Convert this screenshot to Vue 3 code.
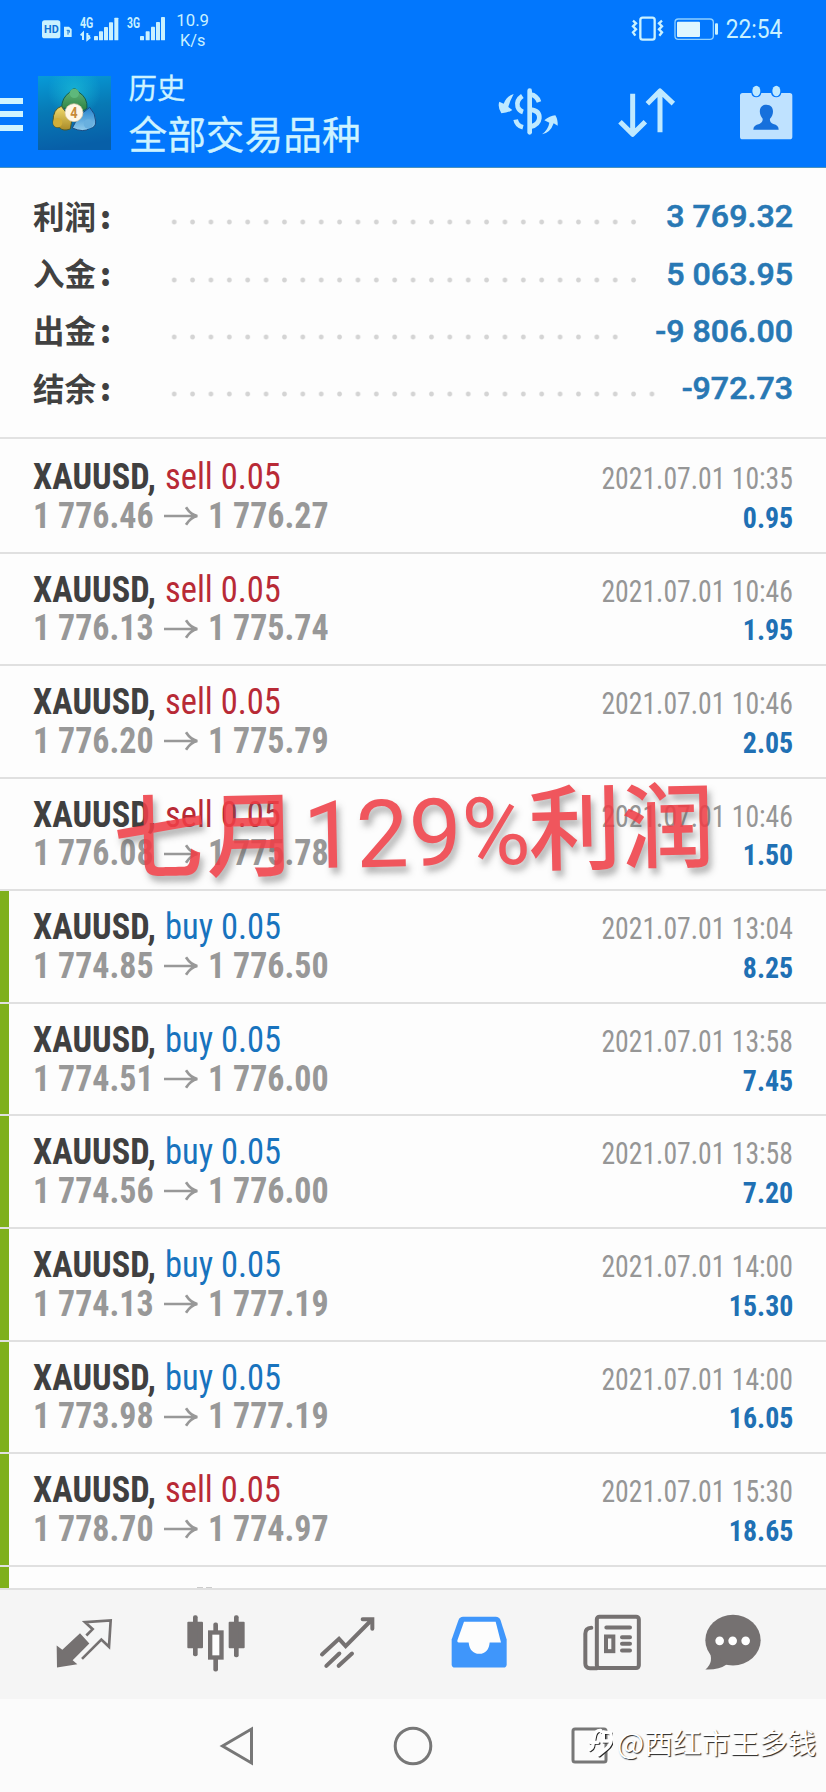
<script setup>
const summary = [
  { label: '利润', value: '3 769.32', dots: 26 },
  { label: '入金', value: '5 063.95', dots: 26 },
  { label: '出金', value: '-9 806.00', dots: 25 },
  { label: '结余', value: '-972.73', dots: 27 },
]
const deal = (side, open, close, time, profit, marked = true) => ({ side, open, close, time, profit, marked })
const deals = [
  deal('sell', '1 776.46', '1 776.27', '10:35', '0.95', false),
  deal('sell', '1 776.13', '1 775.74', '10:46', '1.95', false),
  deal('sell', '1 776.20', '1 775.79', '10:46', '2.05', false),
  deal('sell', '1 776.08', '1 775.78', '10:46', '1.50', false),
  deal('buy', '1 774.85', '1 776.50', '13:04', '8.25'),
  deal('buy', '1 774.51', '1 776.00', '13:58', '7.45'),
  deal('buy', '1 774.56', '1 776.00', '13:58', '7.20'),
  deal('buy', '1 774.13', '1 777.19', '14:00', '15.30'),
  deal('buy', '1 773.98', '1 777.19', '14:00', '16.05'),
  deal('sell', '1 778.70', '1 774.97', '15:30', '18.65'),
]
const barsA = [[282, 108], [297, 94], [312, 81], [327, 67], [343, 53]]
const barsB = [[420, 108], [437, 94], [453, 80], [468, 66], [483, 51]]
</script>

<template>
  <div class="screen">
    <header class="top">
      <div class="status">
        <svg width="215" height="56" viewBox="0 0 645 168" class="pale">
          <rect x="126" y="61" width="55" height="54" rx="8" />
          <text x="132" y="99" font-size="31" font-weight="700" textLength="44" lengthAdjust="spacingAndGlyphs" class="cut">HD</text>
          <path d="M192 80H207L215 88V111H192Z" />
          <path d="M200 91H204V104M204 91H208V98" class="cutline" />
          <text x="240" y="83" font-size="42" font-weight="700" textLength="40" lengthAdjust="spacingAndGlyphs">4G</text>
          <path d="M249 120V99L242 106M262 99V119L271 112M262 106L270 110" fill="none" stroke="#c9f1ff" stroke-width="6" />
          <rect v-for="b in barsA" :key="b[0]" :x="b[0]" :y="b[1]" width="12" :height="121 - b[1]" rx="2" />
          <text x="381" y="83" font-size="42" font-weight="700" textLength="39" lengthAdjust="spacingAndGlyphs">3G</text>
          <rect v-for="b in barsB" :key="b[0]" :x="b[0]" :y="b[1]" width="12" :height="121 - b[1]" rx="2" />
          <text x="529" y="77" font-size="52" textLength="98" lengthAdjust="spacingAndGlyphs">10.9</text>
          <text x="540" y="138" font-size="50" textLength="76" lengthAdjust="spacingAndGlyphs">K/s</text>
        </svg>
        <svg width="200" height="56" viewBox="639 0 600 168" class="pale">
          <rect x="682" y="53" width="43" height="66" rx="7" fill="none" stroke="#c9f1ff" stroke-width="7" />
          <path d="M660 62L669 70L660 79L669 88L660 97L667 107M747 62L738 70L747 79L738 88L747 97L739 107" fill="none" stroke="#c9f1ff" stroke-width="7" />
          <rect x="786" y="57" width="115" height="61" rx="10" fill="none" stroke="#8fd0ff" stroke-width="4" />
          <rect x="792" y="65" width="69" height="46" rx="3" fill="#dff7ff" />
          <rect x="906" y="70" width="9" height="34" rx="3" />
          <text x="938" y="115" font-size="76" textLength="170" lengthAdjust="spacingAndGlyphs">22:54</text>
        </svg>
      </div>
      <div class="bar">
        <div class="menu"><i></i><i></i><i></i></div>
        <svg class="logo" width="73" height="74" viewBox="113 227 219 222">
          <defs>
            <linearGradient id="bg" x1="0" y1="0" x2=".15" y2="1">
              <stop offset="0" stop-color="#079bd8" /><stop offset=".5" stop-color="#0779b5" /><stop offset="1" stop-color="#075fa8" />
            </linearGradient>
            <radialGradient id="glow"><stop offset="0" stop-color="#19b9d6" stop-opacity=".8" /><stop offset="1" stop-color="#19b9d6" stop-opacity="0" /></radialGradient>
            <linearGradient id="green" x1="0" y1="0" x2="0" y2="1"><stop offset="0" stop-color="#65b87d" /><stop offset="1" stop-color="#277c3c" /></linearGradient>
            <linearGradient id="gold" x1="0" y1="0" x2="0" y2="1"><stop offset="0" stop-color="#f2dc6d" /><stop offset="1" stop-color="#a98a28" /></linearGradient>
            <linearGradient id="sky" x1="0" y1="0" x2="0" y2="1"><stop offset="0" stop-color="#2482cd" /><stop offset="1" stop-color="#92ccec" /></linearGradient>
          </defs>
          <rect x="113" y="227" width="219" height="222" fill="url(#bg)" />
          <circle cx="222" cy="270" r="80" fill="url(#glow)" />
          <path d="M208 276Q222 254 236 276Q262 292 260 324L240 337L202 325L184 323Q184 292 208 276Z" fill="url(#green)" stroke="#175e4b" stroke-width="3" />
          <circle cx="222" cy="279" r="14" fill="#5eb87b" />
          <path d="M183 318L200 340L214 362L210 386Q188 394 178 382Q157 384 158 363Q158 326 183 318Z" fill="url(#gold)" stroke="#4e5b2c" stroke-width="3" />
          <circle cx="172" cy="367" r="14" fill="#d0ae39" />
          <path d="M247 338L268 321Q286 340 286 362Q288 382 268 384Q250 398 216 383L225 366Z" fill="url(#sky)" stroke="#1b4c82" stroke-width="3" />
          <circle cx="264" cy="371" r="14" fill="#69b0df" />
          <circle cx="221" cy="337" r="27" fill="#fff7e6" stroke="#d9c8a6" stroke-width="2" />
          <text x="210" y="353" font-size="42" font-weight="700" textLength="22" lengthAdjust="spacingAndGlyphs" fill="#c78a38">4</text>
        </svg>
        <div class="titles">
          <div class="t1">历史</div>
          <div class="t2">全部交易品种</div>
        </div>
        <div class="actions">
          <svg width="66" height="66" viewBox="247 236 198 198">
            <g fill="none" stroke="#bfe9ff" stroke-width="14">
              <path d="M351 271V396" stroke-linecap="round" />
              <path d="M354 283Q372 285 379 305M329 287Q310 300 315 319Q319 331 331 335" />
              <path d="M354 328Q382 332 380 354Q378 374 354 379M309 358Q312 376 331 381" />
            </g>
            <path d="M303 281Q283 286 273 310L260 304Q254 320 266 339Q286 338 299 329L287 320Q292 301 303 281Z" fill="#bfe9ff" />
            <path d="M388 402Q407 387 410 367L395 360Q411 346 428 345Q436 358 435 376L423 369Q413 398 388 402Z" fill="#bfe9ff" />
          </svg>
          <svg width="66" height="66" viewBox="605 236 198 198" fill="none" stroke="#bfe9ff" stroke-width="15" stroke-linecap="butt" stroke-linejoin="round">
            <path d="M661 280V402M623 364L661 402L699 364M743 396V272M705 310L743 272L783 310" />
          </svg>
          <svg width="66" height="66" viewBox="961 236 198 198">
            <path d="M990 278H1016Q1018 291 1031 291Q1043 291 1046 278H1075Q1078 291 1091 291Q1103 291 1106 278H1131Q1139 278 1139 286V409Q1139 417 1131 417H990Q982 417 982 409V286Q982 278 990 278Z" fill="#bfe2ff" />
            <ellipse cx="1031" cy="272" rx="12" ry="16" fill="#bfe9ff" /><ellipse cx="1091" cy="272" rx="12" ry="16" fill="#bfe9ff" />
            <path d="M1061 313C1036 313 1038 343 1050 355Q1051 366 1040 371Q1022 374 1022 388H1098Q1098 374 1082 371Q1070 366 1072 355C1085 343 1086 313 1061 313Z" fill="#1670dc" />
          </svg>
        </div>
      </div>
    </header>

    <section class="summary">
      <div v-for="s in summary" :key="s.label" class="sum">
        <span class="lab">{{ s.label }}<b>:</b></span>
        <span class="dots" :style="{ width: s.dots * 18.38 + 'px' }"></span>
        <span class="val">{{ s.value }}</span>
      </div>
    </section>

    <main class="list">
      <div v-for="(d, i) in deals" :key="i" class="deal" :class="{ marked: d.marked }">
        <div class="line">
          <span class="sym"><span class="cond">XAUUSD,</span></span>
          <span class="side" :class="d.side"><span class="cond">{{ d.side }} 0.05</span></span>
          <span class="date"><span class="cond">2021.07.01 {{ d.time }}</span></span>
        </div>
        <div class="line">
          <span class="price p1"><span class="cond">{{ d.open }}</span></span>
          <svg class="arrow" width="35" height="20" viewBox="0 0 105 60" fill="none" stroke="#989898" stroke-width="8"><path d="M0 30H98M66 4Q80 26 100 30Q80 34 66 56" /></svg>
          <span class="price"><span class="cond">{{ d.close }}</span></span>
          <span class="profit"><span class="cond">{{ d.profit }}</span></span>
        </div>
      </div>
      <div class="peek marked"><i></i><i></i></div>
      <div class="banner"><span>七月</span><em>129%</em><span>利润</span></div>
    </main>

    <nav class="tabs">
      <svg width="66" height="66" viewBox="153 214.5 198 198">
        <path d="M170 318L187 331L240 281L268 312L218 362L232 374L171 384Z" fill="#757171" />
        <path d="M246 358L304 300L327 322L332 243L255 248L278 269L259 288" fill="none" stroke="#757171" stroke-width="8" />
      </svg>
      <svg width="66" height="66" viewBox="548 214.5 198 198" fill="#757171">
        <rect x="561" y="247" width="47" height="79" rx="3" /><rect x="578" y="227" width="14" height="123" rx="6" />
        <rect x="685" y="247" width="48" height="79" rx="3" /><rect x="701" y="227" width="14" height="126" rx="6" />
        <rect x="639" y="249" width="14" height="147" rx="6" /><rect x="629.5" y="279" width="34" height="75" fill="#fdfdfd" stroke="#757171" stroke-width="13" />
      </svg>
      <svg width="66" height="66" viewBox="942 214.5 198 198" fill="none" stroke="#757171" stroke-width="12" stroke-linecap="round">
        <path d="M966 345L1017 298L1037 320L1116 240M1088 239H1117V268M979 379L1018 342M1016 379L1056 342" />
      </svg>
      <svg width="66" height="66" viewBox="99 214.5 198 198">
        <path d="M150 232H248Q259 232 263 243L281 300V374Q281 384 271 384H126Q116 384 116 374V300L136 243Q140 232 150 232Z" fill="#3f96fb" />
        <path d="M153 247L133 303Q132 309 137 309H167C169 330 180 343 199 343C218 343 228 330 230 309H264L248 247Z" fill="#fdfdfd" />
      </svg>
      <svg width="66" height="66" viewBox="498 214.5 198 198" fill="none" stroke="#757171" stroke-width="12" stroke-linecap="round">
        <rect x="551.5" y="231.5" width="126" height="154" rx="8" />
        <path d="M535 265Q517 266 517 283V372Q517 386 531 386H552M580 264H651M627 293H651M627 313H651M627 333H651" />
        <rect x="579" y="291" width="22" height="44" />
      </svg>
      <svg width="66" height="66" viewBox="858 214.5 198 198" fill="#757171">
        <ellipse cx="960" cy="302" rx="83" ry="76" /><path d="M887 330Q905 368 877 390Q917 392 942 374Z" />
        <g fill="#fff"><circle cx="920" cy="304" r="13" /><circle cx="959" cy="304" r="13" /><circle cx="998" cy="304" r="13" /></g>
      </svg>
    </nav>

    <footer class="sys">
      <svg width="36" height="42" viewBox="0 0 36 42"><path d="M3.5 21L32.5 4V38Z" /></svg>
      <svg width="42" height="42" viewBox="0 0 42 42"><circle cx="21" cy="21" r="17.8" /></svg>
      <svg width="38" height="42" viewBox="0 0 38 42"><rect x="3" y="4" width="33" height="33" rx="2" /></svg>
      <div class="credit">
        <svg width="29" height="34" viewBox="0 0 87 102" fill="none">
          <g stroke-linecap="round">
            <path d="M18 52H42M50 16Q34 15 31 36L26 64Q25 70 17 74M52 20L80 24Q88 54 68 70L44 90M58 28V48H78" stroke="#222" stroke-width="9" transform="translate(3 3)" />
            <path d="M18 52H42M50 16Q34 15 31 36L26 64Q25 70 17 74M52 20L80 24Q88 54 68 70L44 90M58 28V48H78" stroke="#fff" stroke-width="10" />
          </g>
        </svg>
        <span>@西红市王多钱</span>
      </div>
    </footer>
  </div>
</template>

<style>
body { background: #fbfbfb; }
</style>
<style scoped>
.screen { width: 826px; height: 1792px; overflow: hidden; display: flex; flex-direction: column; background: #fdfdfd; font-family: Roboto, "Noto Sans CJK SC", sans-serif; }
svg { display: block; flex: none; }
.top { height: 168px; box-sizing: border-box; background: #0277fd; border-bottom: 1px solid #4b93bd; flex: none; }
.status { display: flex; justify-content: space-between; height: 56px; }
.pale { fill: #c9f1ff; }
.cut { fill: #0f72d8; }
.cutline { stroke: #0f72d8; stroke-width: 3; fill: none; }
.bar { display: flex; height: 111px; align-items: flex-start; }
.menu { display: flex; flex-direction: column; gap: 7.6px; padding-top: 41.5px; width: 37.5px; }
.menu i { width: 23px; height: 6px; background: #cff4ff; }
.logo { margin-top: 19.5px; }
.titles { margin-left: 18px; color: #cdf3ff; white-space: nowrap; font-family: "Noto Sans CJK SC", sans-serif; -webkit-text-stroke: .3px #cdf3ff; }
.t1 { font-size: 28.5px; line-height: 34px; margin-top: 14px; }
.t2 { font-size: 38.7px; line-height: 44px; margin-top: 6px; }
.actions { margin-left: auto; display: flex; gap: 53px; margin-right: 26.7px; padding-top: 22.7px; }
.summary { height: 270.5px; box-sizing: border-box; padding: 20px 33px 0; border-bottom: 2px solid #e2e2e2; flex: none; margin-bottom: 2.65px; }
.sum { height: 57.4px; display: flex; align-items: center; }
.lab { width: 132px; flex: none; color: #414141; font: 700 31.5px/57px "Noto Sans CJK SC", sans-serif; margin-top: -3px; }
.lab b { margin-left: 4px; }
.dots { height: 6px; margin-top: 11px; background: radial-gradient(circle at 9.2px 3px, #d4d4d4 1.8px, transparent 3px) 0 0 / 18.38px 6px repeat-x; }
.val { margin-left: auto; color: #2878b4; font-weight: 500; font-size: 32.2px; line-height: 57px; -webkit-text-stroke: .6px #2878b4; }
.list { height: 1146.85px; overflow: hidden; position: relative; flex: none; }
.deal { height: 112.55px; box-sizing: border-box; border-bottom: 2px solid #e0e0e0; padding: 17px 33px 0 33px; }
.deal.marked, .peek.marked { background: linear-gradient(#7fb01c, #7fb01c) 0 0 / 9.3px 100% no-repeat; }
.cond { font-stretch: 75%; font-family: "Roboto Condensed", Roboto, sans-serif; display: inline-block; transform-origin: 0 50%; transform: scaleX(.93); }
.line { height: 38.7px; line-height: 38.7px; display: flex; align-items: baseline; white-space: nowrap; }
.sym { width: 132px; font-size: 37px; font-weight: 700; color: #404040; }
.sym .cond { transform: scaleX(.928); }
.side { font-size: 36.5px; }
.side .cond { transform: scaleX(.945); }
.sell { color: #b82a36; }
.buy { color: #1873be; }
.date { margin-left: auto; font-size: 30.5px; color: #969696; }
.date .cond { transform: scaleX(.908); transform-origin: 100% 50%; }
.price { font-size: 36.5px; font-weight: 700; color: #989898; }
.p1 { width: 131px; }
.arrow { margin-right: 9px; align-self: center; }
.profit { margin-left: auto; font-size: 30px; font-weight: 700; color: #2070b4; }
.profit .cond { transform-origin: 100% 50%; }
.peek { height: 22px; display: flex; align-items: flex-end; gap: 3px; padding-left: 197px; }
.peek i { width: 6px; height: 2px; background: #ccc; }
.banner { position: absolute; left: 113px; top: 329.5px; display: flex; align-items: baseline; line-height: 110px; color: #ef3f47; opacity: .88; transform: rotate(-1.2deg); white-space: nowrap; text-shadow: 3px 6px 6px rgba(90, 90, 90, .5); }
.banner span { font: 500 93px/110px "Noto Sans CJK SC", sans-serif; }
.banner em { font: 400 94px/110px Roboto, sans-serif; margin: 0 -2px 0 4px; }
.tabs { height: 111px; box-sizing: border-box; background: #f5f5f5; border-top: 2px solid #e0e0e0; display: grid; grid-template-columns: 132px 131px 132px 132px 134px 106px; justify-items: center; align-items: center; padding-left: 18px; flex: none; }
.sys { flex: 1; background: #fbfbfb; display: flex; align-items: flex-start; padding: 26px 0 0 218.5px; position: relative; }
.sys > svg { fill: none; stroke: #777; stroke-width: 3; }
.sys > svg:nth-child(2) { margin-left: 137px; }
.sys > svg:nth-child(3) { margin-left: 136px; }
.credit { position: absolute; left: 584px; top: 23px; display: flex; align-items: center; color: #fff; white-space: nowrap; }
.credit span { margin-left: 4px; font: 400 28.7px/40px "Noto Sans CJK SC", sans-serif; text-shadow: 1px 1px 1px #222; }
</style>
